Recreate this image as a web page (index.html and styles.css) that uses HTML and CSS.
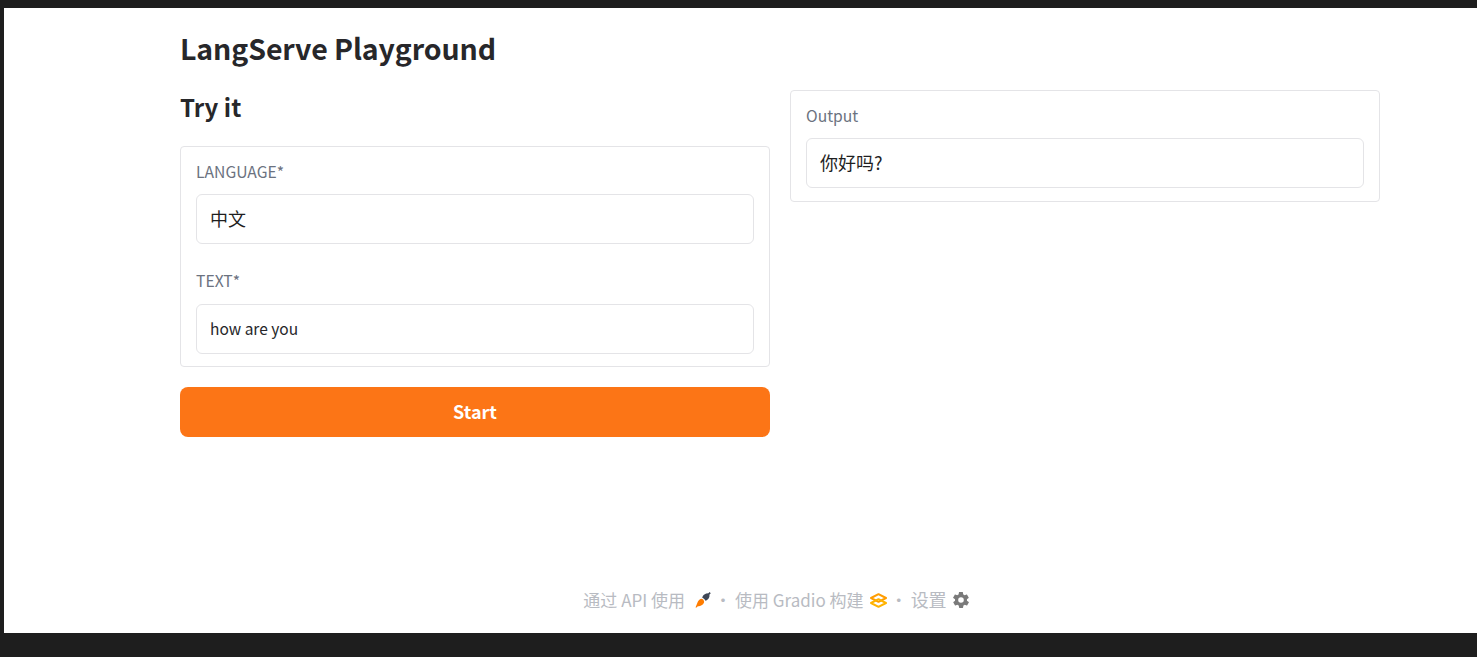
FILE: index.html
```html
<!DOCTYPE html>
<html lang="zh">
<head>
    <meta charset="UTF-8">
    <title>LangServe Playground</title>
    <link rel="stylesheet" href="styles.css">
</head>
<body>
<div class="page">
    <h1 class="title">LangServe Playground</h1>
    <div class="columns">
        <div class="col">
            <h2 class="subtitle">Try it</h2>
            <div class="card">
                <div class="field">
                    <div class="label">LANGUAGE*</div>
                    <div class="input cjk">中文</div>
                </div>
                <div class="field">
                    <div class="label">TEXT*</div>
                    <div class="input">how are you</div>
                </div>
            </div>
            <button class="start">Start</button>
        </div>
        <div class="col">
            <div class="card output">
                <div class="field">
                    <div class="label">Output</div>
                    <div class="input cjk">你好吗?</div>
                </div>
            </div>
        </div>
    </div>
    <div class="footer">
        <span class="link"><span>通过 API 使用</span>
            <svg class="icon rocket" width="16" height="16" viewBox="0 0 16 16">
                <path fill="#ff7c00" d="M0.500 15.500l1.800-4.500C3 9 4.500 7 6.300 6.800c1.200-.1 2.700 1.300 2.800 2.600.1 1.300-.7 2.500-1.800 3.400-1.500 1.200-3.300 1.500-4.500 1.500l-1.200 1.200z"/>
                <path fill="#3f4756" d="M7.200 5.800c.5-2 2-3.700 4-4.300l2.200-.2L14.600 0l1.200 1.200-1.300 1.200-.1 2.300c-.6 2-2 3.500-4 4.100-.5-1.300-1.700-2.500-3.200-3z"/>
            </svg>
        </span>
        <span class="dot">·</span>
        <span class="link"><span>使用 Gradio 构建</span>
            <svg class="icon" width="17" height="15" viewBox="0 0 17 15">
                <path fill="none" stroke="#ff9d00" stroke-width="2" stroke-linejoin="round" d="M8.500 1.200L16 5l-7.500 3.800L1 5z"/>
                <path fill="none" stroke="#ffb300" stroke-width="2" stroke-linejoin="round" d="M8.500 6.200L16 10l-7.500 3.800L1 10z"/>
            </svg>
        </span>
        <span class="dot">·</span>
        <span class="link"><span class="settings">设置</span>
            <svg class="icon" width="16" height="16" viewBox="2 2 20 20">
                <path fill="#7a7a7a" d="M19.400 13c.1-.3.1-.6.1-1s0-.7-.1-1l2.100-1.600c.2-.2.2-.4.1-.6l-2-3.500c-.1-.2-.4-.3-.6-.2l-2.500 1c-.5-.4-1.100-.7-1.700-1l-.4-2.600c0-.2-.3-.4-.5-.4h-4c-.2 0-.5.2-.5.4l-.4 2.600c-.6.3-1.200.6-1.700 1l-2.500-1c-.2-.1-.5 0-.6.2l-2 3.500c-.1.2-.1.4.1.6L4.600 11c-.1.3-.1.7-.1 1s0 .7.1 1l-2.100 1.600c-.2.2-.2.4-.1.6l2 3.500c.1.2.4.3.6.2l2.500-1c.5.4 1.100.7 1.700 1l.4 2.600c0 .2.3.4.5.4h4c.2 0 .5-.2.5-.4l.4-2.600c.6-.3 1.200-.6 1.700-1l2.500 1c.2.1.5 0 .6-.2l2-3.500c.1-.2.1-.4-.1-.6zM12 15.500a3.500 3.500 0 1 1 0-7 3.500 3.500 0 0 1 0 7z"/>
            </svg>
        </span>
    </div>
</div>
</body>
</html>
```

FILE: styles.css
```css
* {
    margin: 0;
    padding: 0;
    box-sizing: border-box;
}

html, body {
    height: 100%;
}

body {
    background-color: #1e1e1e;
    padding: 8px 0 24px 4px;
    font-family: "Noto Sans CJK SC", "Noto Sans", sans-serif;
    color: #27272a;
}

.page {
    height: 100%;
    background-color: #ffffff;
    padding: 0 97px 0 176px;
    display: flex;
    flex-direction: column;
}

.title {
    font-size: 28.500px;
    font-weight: 700;
    line-height: 42px;
    margin-top: 19px;
    height: 42px;
    letter-spacing: -0.1px;
    color: #27272a;
}

.columns {
    display: flex;
    gap: 20px;
    margin-top: 21px;
}

.col {
    flex: 1;
    min-width: 0;
}

.subtitle {
    font-size: 24px;
    font-weight: 700;
    line-height: 34px;
    margin-bottom: 22px;
    color: #27272a;
}

.card {
    border: 1px solid #e4e4e7;
    border-radius: 4px;
    padding: 13px 15px 12px;
    display: flex;
    flex-direction: column;
    gap: 25px;
}

.card.output {
    padding-bottom: 13px;
}

.label {
    font-size: 15.700px;
    line-height: 24px;
    margin-bottom: 10px;
    color: #6b7280;
}

.field + .field .label {
    margin-bottom: 11px;
}

.input {
    height: 50px;
    border: 1px solid #e4e4e7;
    border-radius: 6px;
    padding: 0 13px;
    font-size: 15.500px;
    line-height: 46px;
    color: #27272a;
}

.input.cjk {
    font-size: 18px;
    color: #1f1f1f;
}

.start {
    display: block;
    width: 100%;
    height: 50px;
    margin-top: 20px;
    padding-bottom: 2px;
    border: none;
    border-radius: 8px;
    background-color: #fc7516;
    color: #ffffff;
    font-family: inherit;
    font-size: 18px;
    font-weight: 700;
}

.footer {
    margin-top: auto;
    height: 66px;
    padding: 0 8px 2px 0;
    display: flex;
    justify-content: center;
    align-items: center;
    gap: 3.500px;
    font-size: 17px;
    color: #b8bbc2;
}

.link {
    display: flex;
    align-items: center;
    gap: 6px;
}

.settings {
    font-size: 18px;
}

.icon {
    margin-top: 2px;
}

.rocket {
    margin-left: 4px;
}
```
